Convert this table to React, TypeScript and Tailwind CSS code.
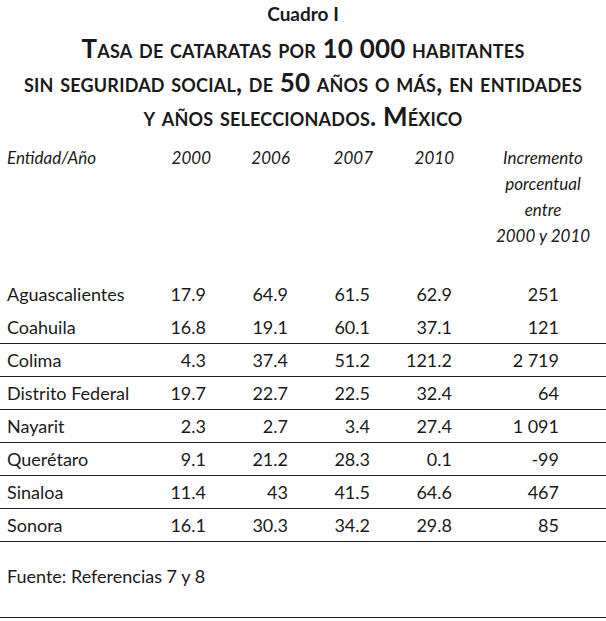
const rows = [
  ["Aguascalientes", "17.9", "64.9", "61.5", "62.9", "251"],
  ["Coahuila", "16.8", "19.1", "60.1", "37.1", "121"],
  ["Colima", "4.3", "37.4", "51.2", "121.2", "2 719"],
  ["Distrito Federal", "19.7", "22.7", "22.5", "32.4", "64"],
  ["Nayarit", "2.3", "2.7", "3.4", "27.4", "1 091"],
  ["Querétaro", "9.1", "21.2", "28.3", "0.1", "-99"],
  ["Sinaloa", "11.4", "43", "41.5", "64.6", "467"],
  ["Sonora", "16.1", "30.3", "34.2", "29.8", "85"],
];

export default function App() {
  return (
    <div className="w-[606px] h-[621px] bg-white text-[#1a1a1a] font-['Lato',sans-serif] overflow-hidden">
      {/* Title */}
      <div className="pt-[3px] text-center font-bold">
        <div className="text-[19px] leading-[22px]">Cuadro I</div>
        <div className="mt-[6px] text-[26px] leading-[34px] tracking-[0.2px] [font-variant:small-caps]">
          <div>Tasa de cataratas por 10 000 habitantes</div>
          <div>sin seguridad social, de 50 años o más, en entidades</div>
          <div>y años seleccionados. México</div>
        </div>
      </div>

      {/* Header */}
      <div className="mt-[12px] pl-[7px] grid grid-cols-[122px_82px_79px_83px_81px_1fr] italic text-[17px] leading-[26px]">
        <div>Entidad/Año</div>
        <div className="text-right">2000</div>
        <div className="text-right">2006</div>
        <div className="text-right">2007</div>
        <div className="text-right">2010</div>
        <div className="pl-[26px] text-center">
          <div>Incremento</div>
          <div>porcentual</div>
          <div>entre</div>
          <div>2000 y 2010</div>
        </div>
      </div>

      {/* Body */}
      <div className="mt-[29px] text-[18px]">
        {rows.map((r, i) => (
          <div
            key={r[0]}
            className={`grid grid-cols-[117px_82px_82px_82px_82px_107px] pl-[7px] h-[33px] leading-[33px] whitespace-nowrap ${
              i === 0 ? "" : "border-b-[1.5px] border-[#222]"
            }`}
          >
            <div>{r[0]}</div>
            {r.slice(1).map((v, j) => (
              <div key={j} className="text-right">{v}</div>
            ))}
          </div>
        ))}
      </div>

      {/* Footer */}
      <div className="mt-[22px] pl-[7px] text-[18px] leading-[24px]">Fuente: Referencias 7 y 8</div>
      <div className="mt-[29px] border-b-[1.5px] border-[#222]" />
    </div>
  );
}
